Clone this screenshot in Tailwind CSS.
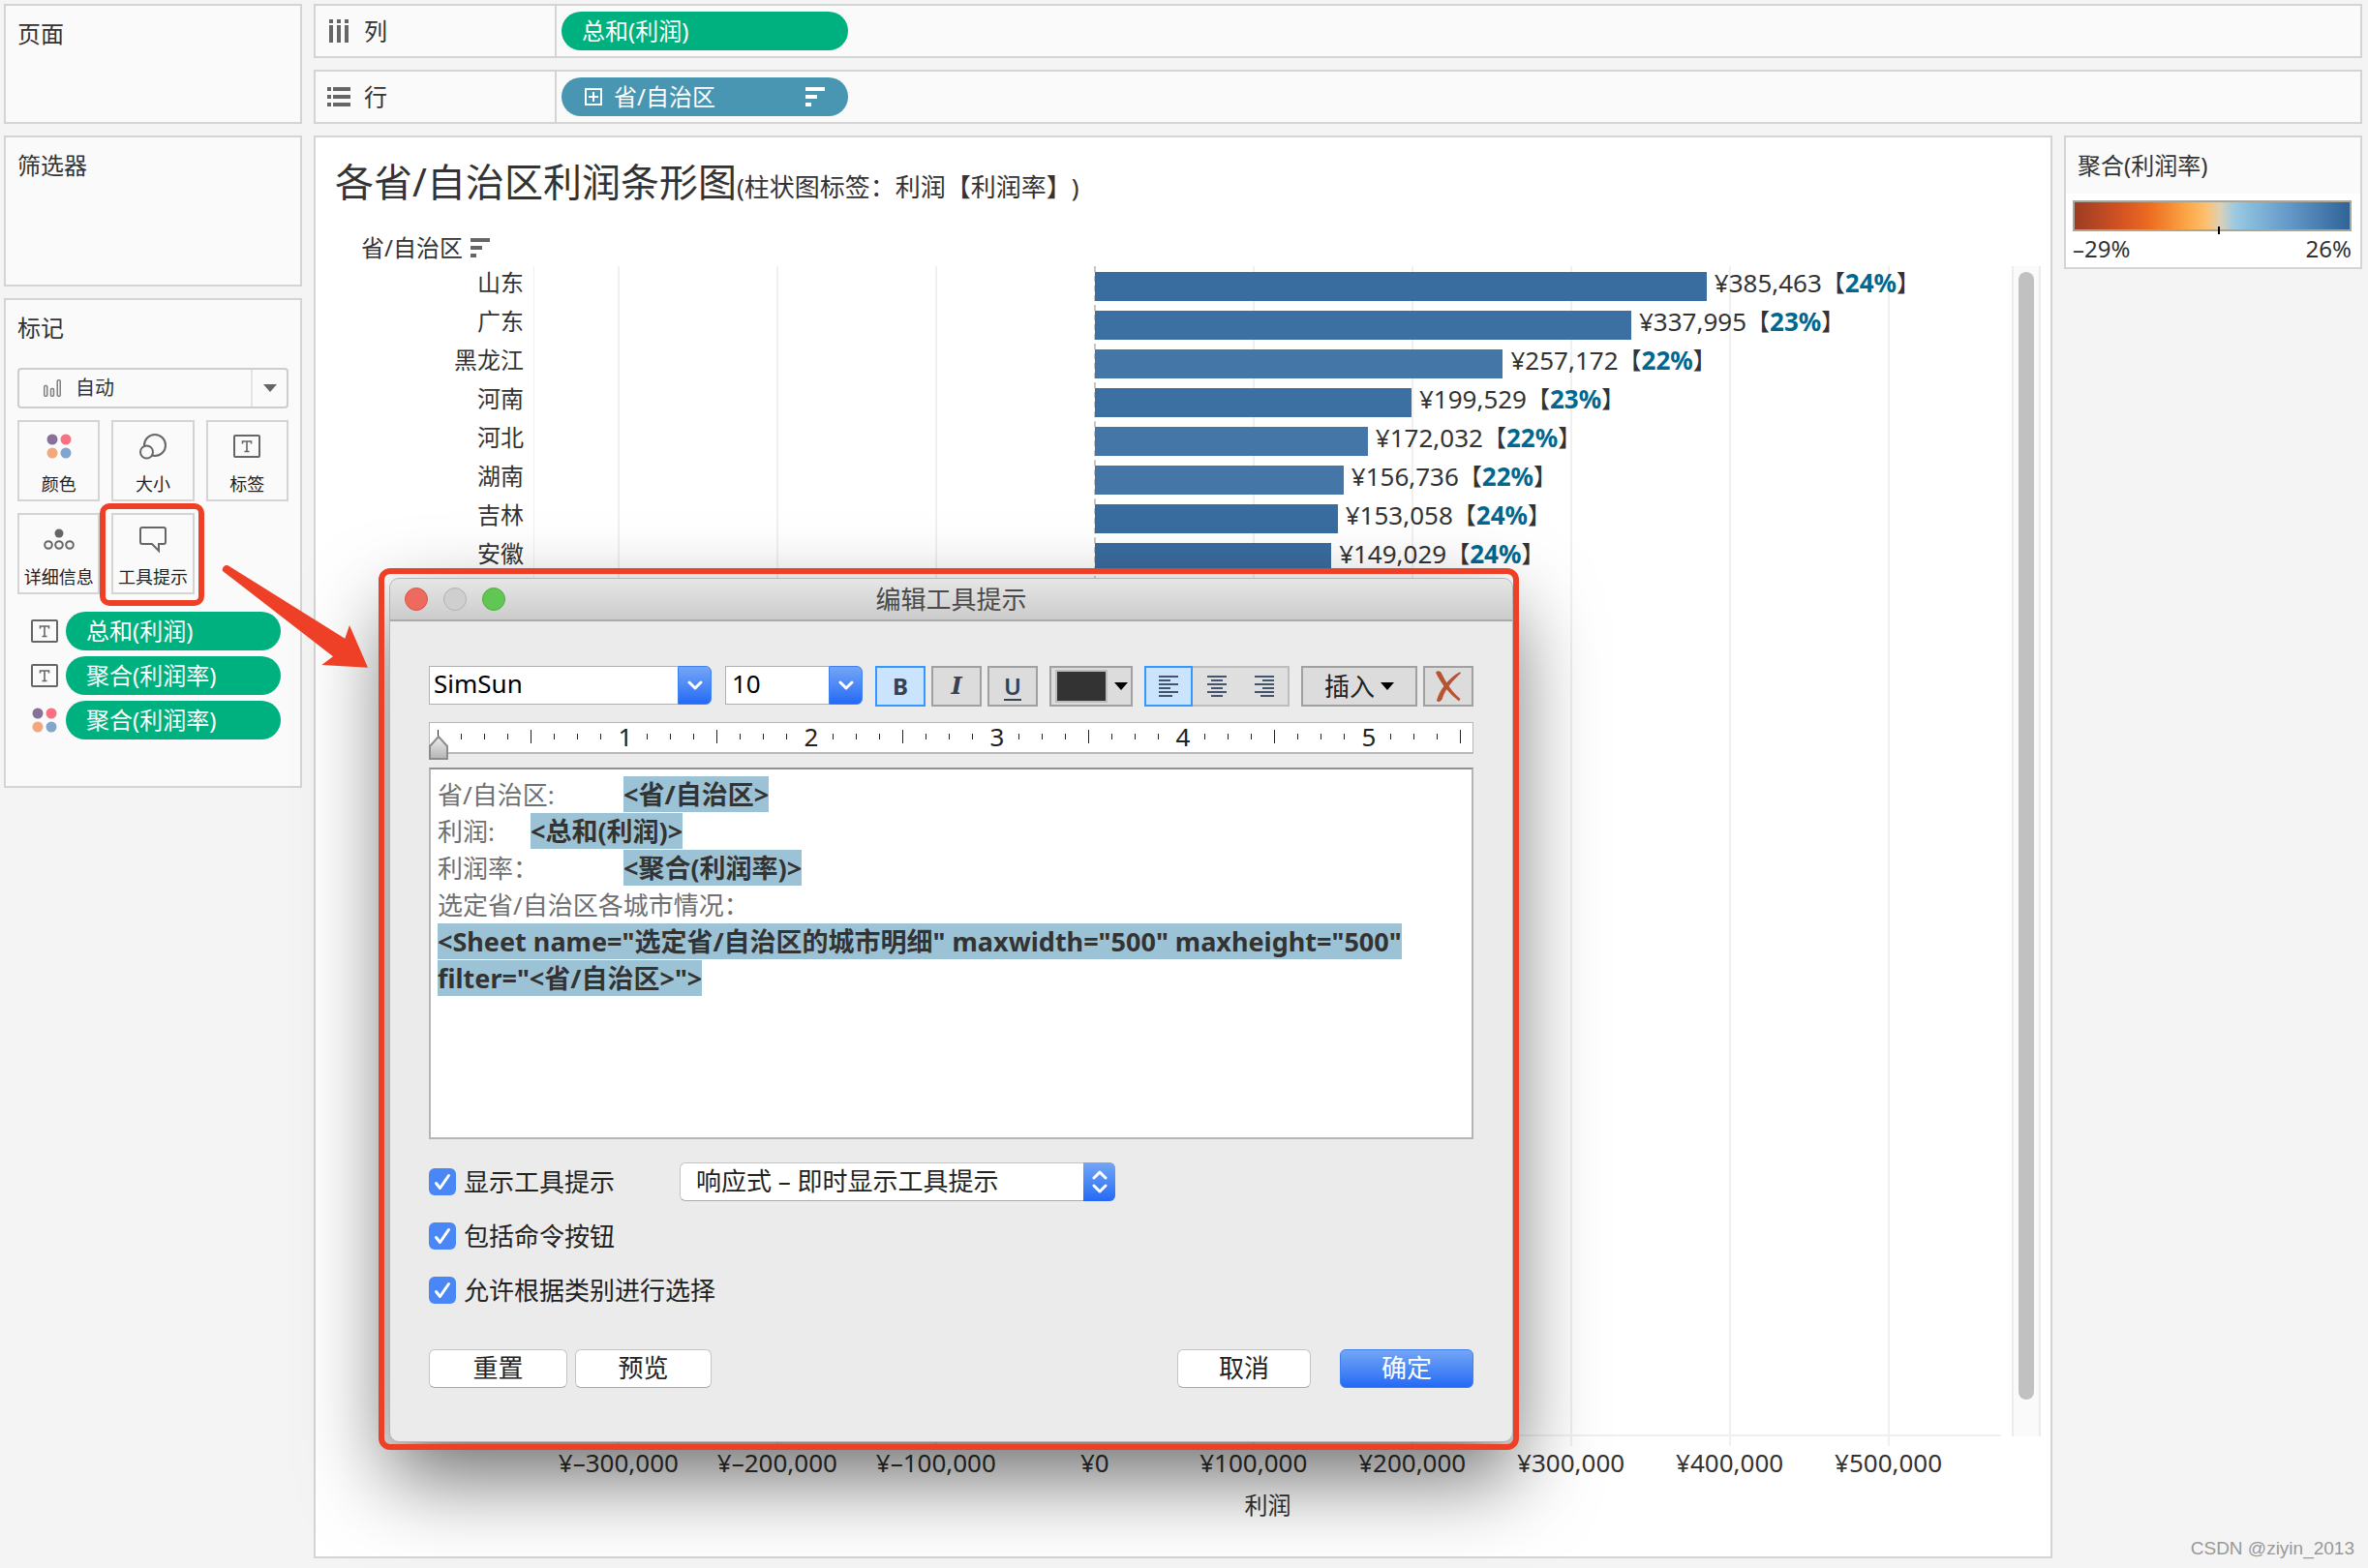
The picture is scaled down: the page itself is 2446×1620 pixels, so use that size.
<!DOCTYPE html>
<html lang="zh-CN">
<head>
  <meta charset="UTF-8" />
  <meta name="viewport" content="width=device-width, initial-scale=1.0" />
  <title>各省/自治区利润条形图</title>
  <script src="https://cdn.jsdelivr.net/npm/@tailwindcss/browser@4"></script>
</head>
<body class="relative min-h-screen flex gap-3 pt-1 pl-1 pr-1.5 pb-2.5 bg-[#f4f4f4] text-[#333] text-2xl font-['Noto_Sans','Noto_Sans_CJK_SC',sans-serif] [text-spacing-trim:space-all]">

  <!-- Shared icons -->
  <svg class="hidden">
    <symbol id="icon-dots" viewBox="0 0 26 26">
      <circle cx="6" cy="6" r="5.5" fill="#87719b" /><circle cx="20" cy="6" r="5.5" fill="#f97284" />
      <circle cx="6" cy="20" r="5.5" fill="#f2a77c" /><circle cx="20" cy="20" r="5.5" fill="#82a5cb" />
    </symbol>
    <symbol id="icon-text" viewBox="0 0 28 24">
      <rect x="1" y="1" width="26" height="22" rx="1" fill="none" stroke="#666" stroke-width="2" />
      <path d="M9.5 9.5V7h9v2.500M14 7v10.500M11.500 17.500h5" fill="none" stroke="#666" stroke-width="1.600" />
    </symbol>
    <symbol id="icon-sort" viewBox="0 0 20 20">
      <path d="M0 0h20v4H0zM0 8h12v4H0zM0 16h6v4H0z" fill="currentColor" />
    </symbol>
  </svg>

  <!-- Left cards -->
  <aside class="w-[308px] shrink-0 flex flex-col gap-3">
    <section class="h-[124px] border-2 border-[#d4d4d4] bg-[#fafafa] px-3 pt-[11px]">
      <h2 class="leading-9">页面</h2>
    </section>
    <section class="h-[156px] border-2 border-[#d4d4d4] bg-[#fafafa] px-3 pt-[11px]">
      <h2 class="leading-9">筛选器</h2>
    </section>
    <section class="border-2 border-[#d4d4d4] bg-[#fafafa] px-3 pt-[11px] pb-12">
      <h2 class="leading-9 mb-[23px]">标记</h2>

      <button class="w-full h-[42px] mb-3 flex items-center rounded-sm border-2 border-[#cdcdcd] text-xl text-left">
        <svg class="ml-[25px] w-[18px] h-[18px]" viewBox="0 0 18 18" fill="none" stroke="#808080" stroke-width="1.500">
          <rect x="0.750" y="6.500" width="3" height="10.750" rx="1" /><rect x="7.500" y="9.500" width="3" height="7.750" rx="1" /><rect x="14.250" y="0.750" width="3" height="16.500" rx="1" />
        </svg>
        <span class="flex-1 ml-[15px]">自动</span>
        <span class="h-full w-[37px] flex items-center justify-center border-l-2 border-[#e4e4e4]">
          <svg class="w-[14px] h-2" viewBox="0 0 14 8"><path d="M0 0h14L7 8z" fill="#666" /></svg>
        </span>
      </button>

      <div class="grid grid-cols-3 gap-3 text-lg leading-6 text-[#222]">
        <button class="h-21 pt-2 flex flex-col items-center justify-between pb-1 border-2 border-[#d4d4d4]">
          <svg class="w-[26px] h-[34px]"><use href="#icon-dots" /></svg>
          <span class="whitespace-nowrap">颜色</span>
        </button>
        <button class="h-21 pt-2 flex flex-col items-center justify-between pb-1 border-2 border-[#d4d4d4]">
          <svg class="w-7 h-[34px]" viewBox="0 0 28 28" fill="#fafafa" stroke="#666" stroke-width="2">
            <circle cx="16" cy="13" r="11" /><circle cx="7.500" cy="20" r="6.500" />
          </svg>
          <span class="whitespace-nowrap">大小</span>
        </button>
        <button class="h-21 pt-2 flex flex-col items-center justify-between pb-1 border-2 border-[#d4d4d4]">
          <svg class="w-7 h-[34px]"><use href="#icon-text" /></svg>
          <span class="whitespace-nowrap">标签</span>
        </button>
        <button class="h-21 pt-2 flex flex-col items-center justify-between pb-1 border-2 border-[#d4d4d4]">
          <svg class="w-8 h-[34px]" viewBox="0 0 32 24" fill="none" stroke="#666" stroke-width="2">
            <circle cx="16" cy="6" r="4.500" fill="#666" stroke="none" />
            <circle cx="5" cy="18" r="3.800" /><circle cx="16" cy="18" r="3.800" /><circle cx="27" cy="18" r="3.800" />
          </svg>
          <span class="whitespace-nowrap">详细信息</span>
        </button>
        <button class="relative h-21 pt-2 flex flex-col items-center justify-between pb-1 border-2 border-[#d4d4d4]">
          <svg class="w-7 h-[34px]" viewBox="0 0 28 28" fill="none" stroke="#666" stroke-width="2">
            <path d="M3 2h22a2 2 0 0 1 2 2v13a2 2 0 0 1-2 2h-5v7l-7-7H3a2 2 0 0 1-2-2V4a2 2 0 0 1 2-2z" />
          </svg>
          <span class="whitespace-nowrap">工具提示</span>
          <!-- Highlight -->
          <span class="absolute -left-3.5 -right-3 -top-3 -bottom-3.5 rounded-[10px] border-6 border-[#ee4026]"></span>
        </button>
      </div>

      <ul class="mt-[18px] pl-3.5 pr-2 flex flex-col gap-1.5 text-white">
        <li class="flex items-center gap-2">
          <svg class="w-7 h-6"><use href="#icon-text" /></svg>
          <button class="flex-1 h-10 pl-[21px] rounded-full bg-[#00b180] text-left">总和(利润)</button>
        </li>
        <li class="flex items-center gap-2">
          <svg class="w-7 h-6"><use href="#icon-text" /></svg>
          <button class="flex-1 h-10 pl-[21px] rounded-full bg-[#00b180] text-left">聚合(利润率)</button>
        </li>
        <li class="flex items-center gap-2">
          <svg class="w-7 h-[26px]"><use href="#icon-dots" /></svg>
          <button class="flex-1 h-10 pl-[21px] rounded-full bg-[#00b180] text-left">聚合(利润率)</button>
        </li>
      </ul>
    </section>
  </aside>

  <main class="flex-1 min-w-0 flex flex-col gap-3">
    <!-- Shelves -->
    <section class="h-14 flex border-2 border-[#d4d4d4] bg-[#fafafa]">
      <h2 class="w-[249px] pl-3 flex items-center gap-3.5 border-r-2 border-[#d4d4d4]">
        <svg class="w-6 h-6" viewBox="0 0 24 24" fill="#666">
          <path d="M2 0h4v4H2zM10 0h4v4h-4zM18 0h4v4h-4zM2 6h4v18H2zM10 6h4v18h-4zM18 6h4v18h-4z" />
        </svg>
        列
      </h2>
      <div class="pl-[5px] flex items-center">
        <button class="w-[296px] h-10 pl-[21px] rounded-full bg-[#00b180] text-white text-left">总和(利润)</button>
      </div>
    </section>
    <section class="h-14 flex border-2 border-[#d4d4d4] bg-[#fafafa]">
      <h2 class="w-[249px] pl-3 flex items-center gap-3.5 border-r-2 border-[#d4d4d4]">
        <svg class="w-6 h-5" viewBox="0 0 24 20" fill="#666">
          <path d="M0 0h4v4H0zM6 0h18v4H6zM0 8h4v4H0zM6 8h18v4H6zM0 16h4v4H0zM6 16h18v4H6z" />
        </svg>
        行
      </h2>
      <div class="pl-[5px] flex items-center">
        <button class="w-[296px] h-10 px-6 flex items-center rounded-full bg-[#4996b2] text-white text-left">
          <svg class="w-[18px] h-[18px]" viewBox="0 0 18 18" fill="none" stroke="currentColor" stroke-width="2">
            <path d="M1 1h16v16H1zM9 4v10M4 9h10" />
          </svg>
          <span class="flex-1 ml-3">省/自治区</span>
          <svg class="w-5 h-5"><use href="#icon-sort" /></svg>
        </button>
      </div>
    </section>

    <div class="flex-1 flex items-start gap-3">
      <!-- Worksheet -->
      <section class="flex-1 self-stretch flex flex-col border-2 border-[#d4d4d4] bg-white">
        <h1 class="pt-[18px] pl-5 text-[40px] leading-[56px]">各省/自治区利润条形图<span class="text-[26px]">(柱状图标签：利润【利润率】)</span></h1>
        <div class="mt-4 h-[38px] pl-[47px] flex items-center gap-2 leading-9">
          省/自治区
          <svg class="w-5 h-5 text-[#666]"><use href="#icon-sort" /></svg>
        </div>
        <div class="flex-1 flex pr-2.5">
          <div class="w-[226px] shrink-0 border-r border-[#efefef] mb-[124px]">
            <ul id="names" class="pr-2.5 text-right"></ul>
          </div>
          <div class="flex-1 flex flex-col">
            <div id="plot" class="relative flex-1 border-b-2 border-[#f0f0f0]"></div>
            <div id="axis" class="relative h-[54px] text-[26px] leading-[54px]"></div>
            <p class="h-[70px] leading-[34px] text-center">利润</p>
          </div>
          <div class="w-[30px] ml-[11px] mb-[124px] pt-1.5 flex justify-center border-x-2 border-[#ececec] bg-[#fafafa]">
            <div class="w-4 h-[1165px] rounded-full bg-[#c1c1c1]"></div>
          </div>
        </div>
      </section>

      <!-- Color legend -->
      <section class="w-[308px] h-[138px] border-2 border-[#d4d4d4] bg-white">
        <h2 class="h-[58px] pl-3 pt-[11px] leading-9 bg-[#fafafa]">聚合(利润率)</h2>
        <div class="pl-[7px] pr-[9px] pt-[7px]">
          <div class="relative h-8 border-2 border-[#aaa595] bg-[linear-gradient(90deg,#9c3d22_0%,#d45322_17%,#ec6b20_27%,#fba343_40%,#fdc070_48%,#dcd0b8_53%,#9dcae1_58%,#87bbdc_64%,#6498c8_78%,#2f6497_100%)]">
            <span class="absolute left-[148px] -bottom-[5px] w-0.5 h-2 bg-black"></span>
          </div>
          <p class="flex justify-between leading-9"><span>–29%</span><span>26%</span></p>
        </div>
      </section>
    </div>
  </main>

  <!-- Arrow from the tooltip card to the dialog -->
  <svg class="absolute left-[224px] top-[578px] w-40 h-[118px] z-20" viewBox="0 0 160 118">
    <path d="M11.500 6.200L132.300 81.700L137 68.100L156 111.800L108.300 109.100L120 100.300L6 11.900A4.500 4.500 0 0 1 11.500 6.200z" fill="#ee4026" />
  </svg>

  <!-- Edit tooltip dialog -->
  <div role="dialog" aria-labelledby="dialogTitle" class="absolute left-[391px] top-[587px] w-[1178px] z-10 pt-2.5 pl-[11px] pr-1.5 pb-2 text-[26px]">
    <div class="rounded-[10px] border border-[#b4b4b4] bg-[#ebebeb] shadow-[0_36px_86px_rgba(0,0,0,0.58)]">
      <header class="relative h-11 pl-[15px] flex items-center gap-4 rounded-t-[10px] border-b-2 border-[#a9a9a9] bg-linear-to-b from-[#e6e6e6] to-[#cccccc]">
        <button aria-label="关闭" class="w-6 h-6 rounded-full border border-[#d9574c] bg-[#ee6a5f]"></button>
        <button aria-label="最小化" class="w-6 h-6 rounded-full border border-[#b2b2b2] bg-[#cfcfcf]"></button>
        <button aria-label="缩放" class="w-6 h-6 rounded-full border border-[#4fae3e] bg-[#62c654]"></button>
        <h2 id="dialogTitle" class="absolute inset-0 flex items-center justify-center pointer-events-none text-[#4a4a4a]">编辑工具提示</h2>
      </header>

      <div class="px-10 pt-[46px] pb-[55px]">
        <!-- Toolbar -->
        <div class="flex items-start h-[42px]">
          <div class="flex h-10 w-[292px] mr-3.5">
            <input type="text" aria-label="字体" value="SimSun" class="flex-1 min-w-0 pl-1 pb-1 border border-r-0 border-[#b0b0b0] bg-white text-black outline-none" />
            <button aria-label="选择字体" class="w-[35px] flex items-center justify-center rounded-r-md border border-[#3f80ee] bg-linear-to-b from-[#74a5f5] to-[#2369f5]">
              <svg class="w-4 h-2.5" viewBox="0 0 16 10" fill="none" stroke="#fff" stroke-width="3" stroke-linecap="round" stroke-linejoin="round"><path d="M2 2l6 6 6-6" /></svg>
            </button>
          </div>
          <div class="flex h-10 w-[142px] mr-[13px]">
            <input type="text" aria-label="字号" value="10" class="flex-1 min-w-0 pl-1.5 pb-1 border border-r-0 border-[#b0b0b0] bg-white text-black outline-none" />
            <button aria-label="选择字号" class="w-[35px] flex items-center justify-center rounded-r-md border border-[#3f80ee] bg-linear-to-b from-[#74a5f5] to-[#2369f5]">
              <svg class="w-4 h-2.5" viewBox="0 0 16 10" fill="none" stroke="#fff" stroke-width="3" stroke-linecap="round" stroke-linejoin="round"><path d="M2 2l6 6 6-6" /></svg>
            </button>
          </div>
          <div class="flex gap-1.5 mr-3 text-2xl text-[#364153]">
            <button class="w-[52px] h-[42px] border-2 border-[#3399ff] bg-[#cbe4fd] font-bold">B</button>
            <button class="w-[52px] h-[42px] border-2 border-[#a0a0a0] bg-[#dcdcdc] font-bold italic font-['DejaVu_Serif',serif]">I</button>
            <button class="w-[52px] h-[42px] border-2 border-[#a0a0a0] bg-[#dcdcdc] font-semibold underline underline-offset-4">U</button>
          </div>
          <button aria-label="文本颜色" class="w-[86px] h-[42px] mr-3 flex items-center justify-between pl-1 pr-[3px] border-2 border-[#a0a0a0] bg-[#dcdcdc]">
            <span class="w-[54px] h-[34px] border-2 border-[#bdbdbd] bg-[#333]"></span>
            <svg class="w-[14px] h-2" viewBox="0 0 14 8"><path d="M0 0h14L7 8z" /></svg>
          </button>
          <div class="flex w-[150px] h-[42px] mr-3">
            <button aria-label="左对齐" class="w-[50px] flex items-center justify-center border-2 border-[#3399ff] bg-[#cbe4fd]">
              <svg class="w-[22px] h-[22px]" viewBox="0 0 22 22" fill="#44546c"><path d="M1 0h20v2H1zM1 4h12v2H1zM1 8h20v2H1zM1 12h12v2H1zM1 16h20v2H1zM1 20h14v2H1z" /></svg>
            </button>
            <button aria-label="居中" class="w-[50px] flex items-center justify-center border-y-2 border-[#bdbdbd] bg-[#dfdfdf]">
              <svg class="w-[22px] h-[22px]" viewBox="0 0 22 22" fill="#44546c"><path d="M1 0h20v2H1zM5 4h12v2H5zM1 8h20v2H1zM5 12h12v2H5zM1 16h20v2H1zM5 20h12v2H5z" /></svg>
            </button>
            <button aria-label="右对齐" class="w-[50px] flex items-center justify-center border-y-2 border-r-2 border-[#bdbdbd] bg-[#dfdfdf]">
              <svg class="w-[22px] h-[22px]" viewBox="0 0 22 22" fill="#44546c"><path d="M1 0h20v2H1zM9 4h12v2H9zM1 8h20v2H1zM9 12h12v2H9zM1 16h20v2H1zM7 20h14v2H7z" /></svg>
            </button>
          </div>
          <button class="w-[120px] h-[42px] mr-1.5 flex items-center justify-center gap-1.5 border-2 border-[#a0a0a0] bg-[#dcdcdc] text-[#222]">
            插入
            <svg class="w-[14px] h-2" viewBox="0 0 14 8"><path d="M0 0h14L7 8z" fill="#000" /></svg>
          </button>
          <button aria-label="清除" class="w-[52px] h-[42px] flex items-center justify-center border-2 border-[#a0a0a0] bg-[#dcdcdc]">
            <svg class="w-[26px] h-8" viewBox="0 0 26 26" preserveAspectRatio="none" fill="#b95432">
              <path d="M0 1.500C2 -0.500 4.500 0 6 2C10 9 17 18 25.500 23.500L24 25.500C15 20 6 12 0 1.500z" />
              <path d="M25 1L26 2C18 8 10 15 7 23C6 26 2 27 1 25C4 16 13 6 25 1z" />
            </svg>
          </button>
        </div>

        <!-- Ruler -->
        <div class="relative mt-4 h-[33px] border border-b-2 border-[#b8b8b8] bg-white">
          <div id="ruler" class="flex pl-2 pt-[7px] text-[#222]"></div>
          <svg class="absolute -left-px top-3 w-5 h-[26px]" viewBox="0 0 20 26">
            <defs><linearGradient id="knob" x1="0" y1="0" x2="0" y2="1"><stop offset="0" stop-color="#eee" /><stop offset="1" stop-color="#b4b4b4" /></linearGradient></defs>
            <path d="M1 25V12L10 2l9 10v13z" fill="url(#knob)" stroke="#8c8c8c" stroke-width="2" />
          </svg>
        </div>

        <!-- Tooltip body -->
        <div contenteditable="true" role="textbox" aria-multiline="true" aria-label="工具提示内容" class="mt-3.5 h-[384px] pl-[7px] pr-3 pt-[7px] border-2 border-[#b5b5b5] border-t-[#909090] bg-white leading-[38px] text-[#707070] [tab-size:96px] outline-none">
          <p class="whitespace-pre-wrap">省/自治区:	<b class="bg-[#9cc3d5] text-[27px] text-[#333]">&lt;省/自治区&gt;</b></p>
          <p class="whitespace-pre-wrap">利润:	<b class="bg-[#9cc3d5] text-[27px] text-[#333]">&lt;总和(利润)&gt;</b></p>
          <p class="whitespace-pre-wrap">利润率：	<b class="bg-[#9cc3d5] text-[27px] text-[#333]">&lt;聚合(利润率)&gt;</b></p>
          <p class="whitespace-pre-wrap">选定省/自治区各城市情况：</p>
          <p><b class="bg-[#9cc3d5] text-[27px] text-[#333]">&lt;Sheet name="选定省/自治区的城市明细" maxwidth="500" maxheight="500" filter="&lt;省/自治区&gt;"&gt;</b></p>
        </div>

        <!-- Options -->
        <div class="mt-6 flex flex-col gap-4 text-[#222]">
          <div class="flex items-center h-10">
            <label class="w-[259px] flex items-center gap-2">
              <span class="relative w-7 h-7">
                <input type="checkbox" checked class="block appearance-none w-7 h-7 rounded-md bg-[#4a87f6]" />
                <svg class="absolute inset-0 pointer-events-none" viewBox="0 0 28 28" fill="none" stroke="#fff" stroke-width="3" stroke-linecap="round" stroke-linejoin="round"><path d="M7.500 15.500l4 5L20.500 7.500" /></svg>
              </span>
              显示工具提示
            </label>
            <div class="relative w-[450px]">
              <select aria-label="工具提示方式" class="appearance-none w-full h-10 pl-4 pb-0.5 rounded-md border border-[#c4c4c4] border-b-[#a8a8a8] bg-white">
                <option>响应式 – 即时显示工具提示</option>
              </select>
              <span class="absolute right-0 inset-y-0 w-[33px] flex items-center justify-center rounded-r-md bg-linear-to-b from-[#74a5f5] to-[#2369f5] pointer-events-none">
                <svg class="w-4 h-6" viewBox="0 0 16 24" fill="none" stroke="#fff" stroke-width="3" stroke-linecap="round" stroke-linejoin="round"><path d="M2 8l6-6 6 6M2 16l6 6 6-6" /></svg>
              </span>
            </div>
          </div>
          <div class="flex items-center h-10">
            <label class="flex items-center gap-2">
              <span class="relative w-7 h-7">
                <input type="checkbox" checked class="block appearance-none w-7 h-7 rounded-md bg-[#4a87f6]" />
                <svg class="absolute inset-0 pointer-events-none" viewBox="0 0 28 28" fill="none" stroke="#fff" stroke-width="3" stroke-linecap="round" stroke-linejoin="round"><path d="M7.500 15.500l4 5L20.500 7.500" /></svg>
              </span>
              包括命令按钮
            </label>
          </div>
          <div class="flex items-center h-10">
            <label class="flex items-center gap-2">
              <span class="relative w-7 h-7">
                <input type="checkbox" checked class="block appearance-none w-7 h-7 rounded-md bg-[#4a87f6]" />
                <svg class="absolute inset-0 pointer-events-none" viewBox="0 0 28 28" fill="none" stroke="#fff" stroke-width="3" stroke-linecap="round" stroke-linejoin="round"><path d="M7.500 15.500l4 5L20.500 7.500" /></svg>
              </span>
              允许根据类别进行选择
            </label>
          </div>
        </div>

        <!-- Dialog buttons -->
        <footer class="mt-[41px] flex text-[#222]">
          <button class="w-[143px] h-10 mr-2 pb-0.5 flex items-center justify-center rounded-md border border-[#c4c4c4] border-b-[#a8a8a8] bg-white">重置</button>
          <button class="w-[141px] h-10 pb-0.5 flex items-center justify-center rounded-md border border-[#c4c4c4] border-b-[#a8a8a8] bg-white">预览</button>
          <button class="w-[138px] h-10 ml-auto mr-[30px] pb-0.5 flex items-center justify-center rounded-md border border-[#c4c4c4] border-b-[#a8a8a8] bg-white">取消</button>
          <button class="w-[138px] h-10 pb-0.5 flex items-center justify-center rounded-md border border-[#3f80ee] bg-linear-to-b from-[#74a5f5] to-[#2369f5] text-white">确定</button>
        </footer>
      </div>
    </div>
    <!-- Highlight -->
    <span class="absolute inset-0 rounded-[12px] border-6 border-[#ee4026] pointer-events-none"></span>
  </div>

  <span class="absolute right-3.5 bottom-1.5 text-[19px] leading-7 text-[#999] font-['Liberation_Sans',sans-serif]">CSDN @ziyin_2013</span>

  <script>
    // Profit by province, with the profit ratio in percent
    const rows = [
      ['山东', 385463, 24],
      ['广东', 337995, 23],
      ['黑龙江', 257172, 22],
      ['河南', 199529, 23],
      ['河北', 172032, 22],
      ['湖南', 156736, 22],
      ['吉林', 153058, 24],
      ['安徽', 149029, 24],
    ];
    const colors = { 22: '#4477a8', 23: '#3d70a2', 24: '#396c9f' };

    // Axis runs from MIN to MAX across the plot
    const MIN = -353000;
    const MAX = 571000;
    const pct = (v) => ((v - MIN) / (MAX - MIN)) * 100;
    const yuan = (v) => '¥' + (v < 0 ? '–' : '') + Math.abs(v).toLocaleString('en-US');

    document.getElementById('names').innerHTML = rows
      .map(([name]) => `<li class="h-10 leading-[34px]">${name}</li>`).join('');

    let grid = '';
    let axis = '';
    for (let v = -300000; v <= 500000; v += 100000) {
      grid += v === 0
        ? `<span class="absolute top-0 bottom-0 -ml-px border-l-2 border-dashed border-[#c8c8c8]" style="left:${pct(v)}%"></span>`
        : `<span class="absolute top-0 -bottom-3 -ml-px w-0.5 bg-[#f0f0f0]" style="left:${pct(v)}%"></span>`;
      axis += `<span class="absolute top-0 -translate-x-1/2" style="left:${pct(v)}%">${yuan(v)}</span>`;
    }

    const bars = rows.map(([, value, ratio]) => `
      <li class="h-10 flex items-start" style="padding-left:${pct(0)}%">
        <span class="mt-1.5 h-[30px] shrink-0" style="width:${(value / MAX) * 100}%;background:${colors[ratio]}"></span>
        <span class="ml-2 flex leading-[34px] whitespace-nowrap"><span class="text-[26px]">${yuan(value)}</span>【<b class="text-[26px] text-[#00678f]">${ratio}%</b>】</span>
      </li>`).join('');

    document.getElementById('plot').innerHTML = grid + `<ul class="relative">${bars}</ul>`;
    document.getElementById('axis').innerHTML = axis;

    // Ruler: eight ticks to a unit
    let ticks = '';
    for (let i = 0; i <= 44; i++) {
      if (i > 0 && i % 8 === 0) {
        ticks += `<span class="w-6 shrink-0 h-3.5"><span class="w-0 h-3.5 ml-0.5 flex items-center justify-center">${i / 8}</span></span>`;
      } else if (i % 4 === 0) {
        ticks += '<span class="w-6 shrink-0 h-3.5"><span class="block w-px h-3.5 bg-[#222]"></span></span>';
      } else {
        ticks += '<span class="w-6 shrink-0 h-3.5 pt-1"><span class="block w-px h-1.5 bg-[#222]"></span></span>';
      }
    }
    document.getElementById('ruler').innerHTML = ticks;
  </script>
</body>
</html>
